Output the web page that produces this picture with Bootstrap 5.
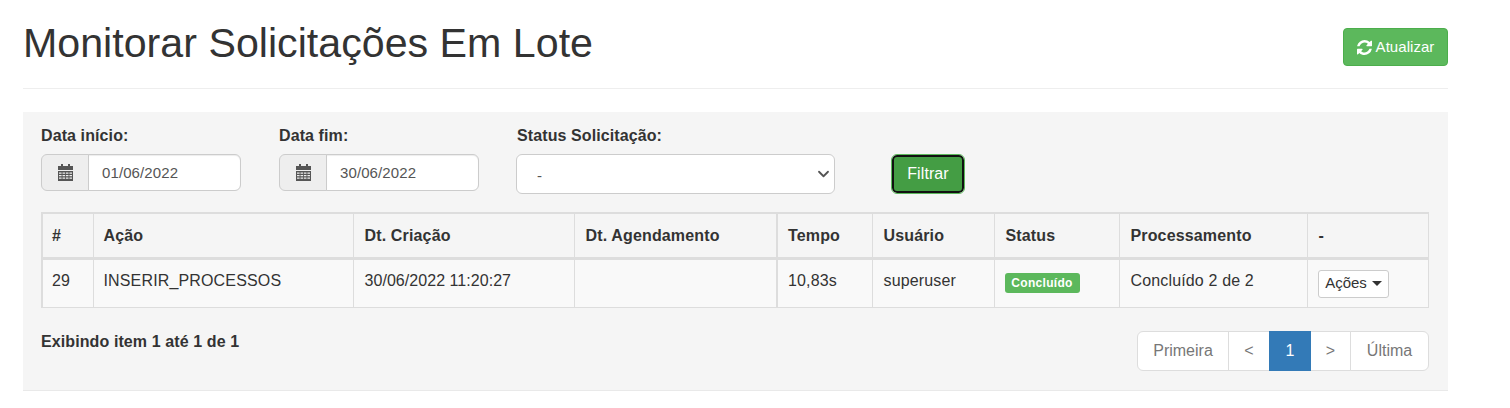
<!DOCTYPE html>
<html lang="pt-BR">
<head>
    <meta charset="UTF-8">
    <title>Monitorar Solicitações Em Lote</title>
    <meta name="viewport" content="width=device-width, initial-scale=1">
    <link href="https://cdn.jsdelivr.net/npm/bootstrap@5.3.3/dist/css/bootstrap.min.css" rel="stylesheet">
    <style>
        body {
            background: #fff;
            color: #333;
            font-family: "Liberation Sans", Arial, sans-serif;
            font-size: 16px;
            letter-spacing: .1px;
        }
        .page-wrap { padding: 0 62px 0 23px; }
        .page-head {
            height: 89px;
            padding-top: 16px;
            border-bottom: 1px solid #eee;
        }
        .page-title {
            font-size: 41.2px;
            font-weight: 400;
            line-height: 54px;
            letter-spacing: 0;
            margin: 0;
        }
        .btn-refresh {
            background: #5cb85c;
            border: 1px solid #4cae4c;
            color: #fff;
            font-size: 15px;
            letter-spacing: .05px;
            height: 38px;
            width: 105px;
            margin-top: 12px;
            padding: 0;
            border-radius: 4px;
        }
        .filter-well {
            margin-top: 23px;
            height: 279px;
            padding: 14px 19px 0 18px;
            background: #f5f5f5;
            border-bottom: 1px solid #e9e9e9;
        }
        .filter-row { height: 86px; }
        .field-date { width: 200px; margin-right: 38px; }
        .field-status { width: 319px; margin: 0 56px 0 -1px; }
        .field-status .field-label { margin-left: 1px; }
        .field-label {
            display: block;
            font-weight: 700;
            line-height: 20px;
            margin: 0 0 8px;
            letter-spacing: .1px;
        }
        .date-group { height: 37px; }
        .date-addon {
            width: 48px;
            justify-content: center;
            padding: 0;
            background: #eee;
            border-color: #ccc;
        }
        .date-input {
            font-size: 15px;
            letter-spacing: .1px;
            color: #555;
            border-color: #ccc;
            padding: 1px 13px 0;
            box-shadow: inset 0 1px 1px rgba(0, 0, 0, .075);
        }
        .status-select {
            height: 40px;
            font-size: 15px;
            color: #555;
            border-color: #ccc;
            padding: 4px 12px 0 20px;
            background-image: url("data:image/svg+xml,%3csvg xmlns='http://www.w3.org/2000/svg' viewBox='0 0 16 16'%3e%3cpath fill='none' stroke='%23555' stroke-linecap='round' stroke-linejoin='round' stroke-width='2.4' d='m2 5 6 6 6-6'/%3e%3c/svg%3e");
            background-position: right 3px center;
            background-size: 15px 12px;
        }
        .btn-filter {
            background: #449d44;
            color: #fff;
            border: 2px solid #111;
            outline: 1px solid #5cb85c;
            outline-offset: 0;
            font-size: 16px;
            letter-spacing: .1px;
            width: 72px;
            height: 38px;
            margin: 29px 0 0 1px;
            padding: 0;
            border-radius: 5px;
        }
        .req-table {
            table-layout: fixed;
            width: 1388px;
            margin: 0;
            border: 1px solid #ddd;
            border-top-width: 2px;
            border-left-width: 2px;
            --bs-table-bg: transparent;
        }
        .req-table th, .req-table td {
            border: 1px solid #ddd;
            padding: 0 10px 0 11px;
            color: #333;
        }
        .req-table tr > :nth-child(1) { padding-left: 9px; }
        .req-table tr > :nth-child(2), .req-table tr > :nth-child(5) { padding-left: 10px; }
        .req-table th { height: 45px; vertical-align: middle; border-bottom-width: 3px; letter-spacing: .15px; padding-top: 2px; }
        .req-table td { height: 49px; vertical-align: top; padding-top: 9px; background: #f9f9f9; letter-spacing: .15px; }
        .req-table td.cell-date { letter-spacing: .05px; }
        .w-id { width: 51px; }
        .w-acao { width: 260px; }
        .w-cria { width: 221px; }
        .w-agen { width: 203px; }
        .w-tempo { width: 95px; border-left-width: 2px !important; }
        .w-user { width: 122px; }
        .w-status { width: 125px; }
        .w-proc { width: 188px; }
        .tag-done {
            display: block;
            width: 75px;
            background: #5cb85c;
            color: #fff;
            font-size: 12px;
            font-weight: 700;
            line-height: 12px;
            letter-spacing: .3px;
            text-align: center;
            padding: 4px 0;
            border-radius: 3px;
            margin: 4px 0 0 -1px;
        }
        .btn-acoes {
            background: #fff;
            border: 1px solid #ccc;
            color: #333;
            font-size: 15px;
            letter-spacing: 0;
            height: 28px;
            width: 71px;
            padding: 0 0 0 1px;
            border-radius: 3px;
            margin: 1px 0 0 -1px;
        }
        .btn-acoes::after {
            border-top-width: 5px;
            border-left-width: 5px;
            border-right-width: 5px;
            margin-left: 5px;
            vertical-align: 2px;
        }
        .foot-row { margin-top: 23px; }
        .foot-info { font-weight: 700; line-height: 20px; margin: 1px 0 0; }
        .pager-box { margin: 0; letter-spacing: 0; }
        .pager-box .page-link {
            color: #777;
            font-size: 16px;
            height: 40px;
            padding: 0;
            line-height: 38px;
            text-align: center;
            border-color: #ddd;
            background: #fff;
        }
        .pager-box .page-item:nth-child(1) .page-link { width: 92px; }
        .pager-box .page-item:nth-child(2) .page-link { width: 42px; }
        .pager-box .page-item:nth-child(3) .page-link { width: 42px; }
        .pager-box .page-item:nth-child(4) .page-link { width: 41px; }
        .pager-box .page-item:nth-child(5) .page-link { width: 79px; }
        .pager-box .page-item.active .page-link {
            background: #337ab7;
            border-color: #337ab7;
            color: #fff;
        }
    </style>
</head>
<body>
    <div class="page-wrap">
        <!-- Cabecalho -->
        <div class="page-head d-flex justify-content-between align-items-start">
            <h1 class="page-title">Monitorar Solicitações Em Lote</h1>
            <button type="button" class="btn btn-refresh d-flex align-items-center justify-content-center gap-1">
                <svg width="15" height="15" viewBox="128 128 1536 1536" fill="#fff" aria-hidden="true">
                    <path d="M1639 1056q0 5-1 7-64 268-268 434.5t-478 166.5q-146 0-282.5-55t-243.5-157l-129 129q-19 19-45 19t-45-19-19-45v-448q0-26 19-45t45-19h448q26 0 45 19t19 45-19 45l-137 137q71 66 161 102t187 36q134 0 250-65t186-179q11-17 53-117 8-23 30-23h192q13 0 22.5 9.5t9.5 22.5zm25-800v448q0 26-19 45t-45 19h-448q-26 0-45-19t-19-45 19-45l138-138q-148-137-349-137-134 0-250 65t-186 179q-11 17-53 117-8 23-30 23h-199q-13 0-22.5-9.5t-9.5-22.5v-7q65-268 270-434.5t480-166.5q146 0 284 55.5t245 156.5l130-129q19-19 45-19t45 19 19 45z"/>
                </svg>
                Atualizar
            </button>
        </div>

        <div class="filter-well">
            <!-- Filtros -->
            <div class="filter-row d-flex align-items-start">
                <div class="field-date">
                    <label class="field-label">Data início:</label>
                    <div class="input-group date-group">
                        <span class="input-group-text date-addon">
                            <svg width="15" height="17" viewBox="0 0 15 17" fill="#555" fill-rule="evenodd" aria-hidden="true"><path d="M0 2h3V0h2v2h5V0h2v2h3v4H0zM0 7h15v10H0zM1 8.5v1.2h2.6V8.5zm3.5 0v1.2h2.6V8.5zm3.4 0v1.2h2.6V8.5zm3.5 0v1.2H14V8.5zM1 11v1.2h2.6V11zm3.5 0v1.2h2.6V11zm3.4 0v1.2h2.6V11zm3.5 0v1.2H14V11zM1 13.6v1.2h2.6v-1.2zm3.5 0v1.2h2.6v-1.2zm3.4 0v1.2h2.6v-1.2zm3.5 0v1.2H14v-1.2z"/></svg>
                        </span>
                        <input type="text" class="form-control date-input" value="01/06/2022">
                    </div>
                </div>
                <div class="field-date">
                    <label class="field-label">Data fim:</label>
                    <div class="input-group date-group">
                        <span class="input-group-text date-addon">
                            <svg width="15" height="17" viewBox="0 0 15 17" fill="#555" fill-rule="evenodd" aria-hidden="true"><path d="M0 2h3V0h2v2h5V0h2v2h3v4H0zM0 7h15v10H0zM1 8.5v1.2h2.6V8.5zm3.5 0v1.2h2.6V8.5zm3.4 0v1.2h2.6V8.5zm3.5 0v1.2H14V8.5zM1 11v1.2h2.6V11zm3.5 0v1.2h2.6V11zm3.4 0v1.2h2.6V11zm3.5 0v1.2H14V11zM1 13.6v1.2h2.6v-1.2zm3.5 0v1.2h2.6v-1.2zm3.4 0v1.2h2.6v-1.2zm3.5 0v1.2H14v-1.2z"/></svg>
                        </span>
                        <input type="text" class="form-control date-input" value="30/06/2022">
                    </div>
                </div>
                <div class="field-status">
                    <label class="field-label">Status Solicitação:</label>
                    <select class="form-select status-select"><option>-</option></select>
                </div>
                <button type="button" class="btn btn-filter">Filtrar</button>
            </div>

            <!-- Resultado -->
            <table class="table req-table">
                <thead>
                    <tr>
                        <th class="w-id">#</th>
                        <th class="w-acao">Ação</th>
                        <th class="w-cria">Dt. Criação</th>
                        <th class="w-agen">Dt. Agendamento</th>
                        <th class="w-tempo">Tempo</th>
                        <th class="w-user">Usuário</th>
                        <th class="w-status">Status</th>
                        <th class="w-proc">Processamento</th>
                        <th>-</th>
                    </tr>
                </thead>
                <tbody>
                    <tr>
                        <td>29</td>
                        <td>INSERIR_PROCESSOS</td>
                        <td class="cell-date">30/06/2022 11:20:27</td>
                        <td></td>
                        <td class="w-tempo">10,83s</td>
                        <td>superuser</td>
                        <td><span class="tag-done">Concluído</span></td>
                        <td>Concluído 2 de 2</td>
                        <td><button type="button" class="btn btn-acoes dropdown-toggle">Ações</button></td>
                    </tr>
                </tbody>
            </table>

            <div class="foot-row d-flex justify-content-between align-items-start">
                <p class="foot-info">Exibindo item 1 até 1 de 1</p>
                <ul class="pagination pager-box">
                    <li class="page-item"><a class="page-link" href="#">Primeira</a></li>
                    <li class="page-item"><a class="page-link" href="#">&lt;</a></li>
                    <li class="page-item active"><a class="page-link" href="#">1</a></li>
                    <li class="page-item"><a class="page-link" href="#">&gt;</a></li>
                    <li class="page-item"><a class="page-link" href="#">Última</a></li>
                </ul>
            </div>
        </div>
    </div>
    <script src="https://cdn.jsdelivr.net/npm/bootstrap@5.3.3/dist/js/bootstrap.bundle.min.js"></script>
</body>
</html>
